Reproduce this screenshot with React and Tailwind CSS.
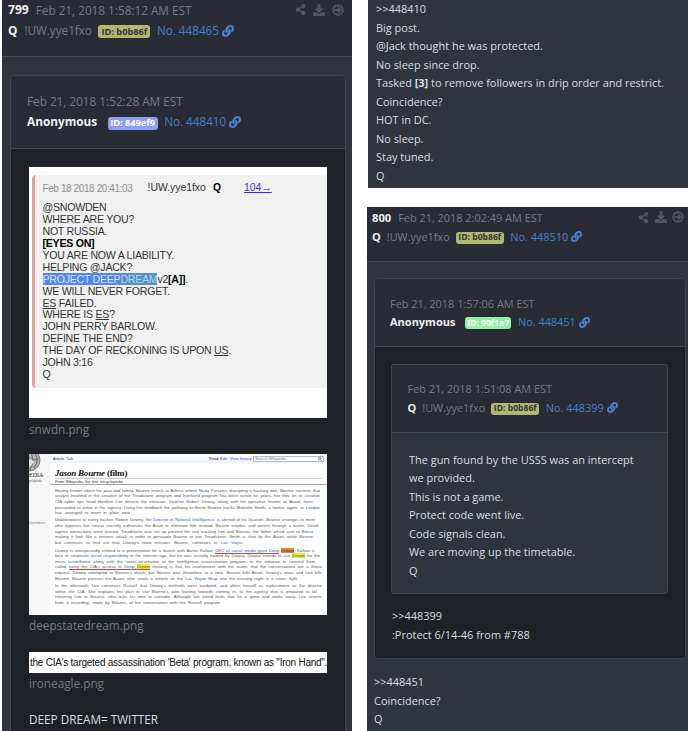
import React from "react";
import { FaShareAlt, FaDownload, FaLink } from "react-icons/fa";

const sans = "font-['Open_Sans','Noto_Sans',sans-serif]";

function CircleArrow({ className }) {
  return (
    <svg viewBox="0 0 24 24" className={className} fill="none" stroke="currentColor" strokeWidth="3.8">
      <circle cx="12" cy="12" r="9.6" />
      <path d="M5.5 12H17M12 6.6L17.4 12L12 17.4" />
    </svg>
  );
}

function Actions({ className }) {
  return (
    <div className={`flex items-center text-[#54565f] ${className}`}>
      <FaShareAlt className="size-[11px]" />
      <FaDownload className="size-[12px]" />
      <CircleArrow className="size-[12px]" />
    </div>
  );
}

const badgeTone = {
  olive: "bg-[#b0b86f] text-[#30333a]",
  violet: "bg-[#8f9df5] text-white",
  green: "bg-[#90f1a7] text-white",
};

function Author({ name, trip, id, tone, no, large, gap }) {
  const badgeSize = large
    ? trip ? "h-[13px] w-[52px] text-[9.2px]" : "h-[13px] w-[50px] text-[9.2px]"
    : trip ? "h-[12px] w-[48px] text-[8.6px]" : "h-[12px] w-[46.5px] text-[8.6px]";
  return (
    <div className={`flex items-center whitespace-nowrap ${large ? "h-5 text-[11.7px]" : "h-[18.5px] text-[10.92px]"}`}>
      <b className={`text-[#f0f0f0] ${large ? "text-[11.8px]" : "text-[11px]"}`}>{name}</b>
      {trip && <span className={`text-[#777a83] ${large ? "ml-[7px]" : "ml-[6px]"}`}>{trip}</span>}
      <span className={`mt-[2px] flex items-center justify-center rounded-[3px] font-bold ${badgeTone[tone]} ${gap} ${badgeSize}`}>
        {id}
      </span>
      <span className="ml-[6.5px] text-[#4380cf]">{no}</span>
      <FaLink className={`ml-[3px] text-[#4a86d8] ${large ? "size-[12px]" : "size-[11px]"}`} stroke="currentColor" strokeWidth="16" />
    </div>
  );
}

function Stamp({ n, children, large }) {
  return (
    <div className={`flex items-center whitespace-nowrap text-[#777a83] ${large ? "h-5 text-[11.75px]" : "h-[18.5px] text-[10.92px]"}`}>
      {n && <b className={`mr-[7px] text-[#f0f0f0] ${large ? "text-[12.1px]" : "text-[11.2px]"}`}>{n}</b>}
      {children}
    </div>
  );
}

function Lines({ children, className = "" }) {
  return <div className={`whitespace-nowrap text-[10.95px] leading-[18.55px] text-[#dcdde0] ${className}`}>{children}</div>;
}

function SnowdenImage() {
  return (
    <div className="h-[251px] w-[297.5px] bg-white pl-[3px] pt-[8px] font-['Liberation_Sans',Arial,sans-serif] text-[#333]">
      <div className="h-[213px] rounded-l-[4px] border-l-[3px] border-[#e9a0a0] bg-[#f1f1f1] pl-[7.5px] pt-[5px]">
        <div className="flex h-[16px] items-center whitespace-nowrap text-[10.4px]">
          <span className="w-[105px] text-[10px] tracking-[-0.4px] text-[#8e8e8e]">Feb 18 2018 20:41:03</span>
          <span className="w-[65.5px]">!UW.yye1fxo</span>
          <b className="w-[31px] text-black">Q</b>
          <u className="text-[#3a2ee0]">104→</u>
        </div>
        <div className="mt-[6px] whitespace-nowrap text-[10.6px] leading-[11.94px] tracking-[-0.26px]">
          <div>@SNOWDEN</div>
          <div>WHERE ARE YOU?</div>
          <div>NOT RUSSIA.</div>
          <div className="font-bold text-black">[EYES ON]</div>
          <div>YOU ARE NOW A LIABILITY.</div>
          <div>HELPING @JACK?</div>
          <div>
            <span className="bg-[#5585f5] text-[#d9e6ff]">PROJECT DEEP</span>
            <span className="bg-[#5590c8] text-[#b9d4ee]">DREAM</span>v2<b className="text-black">[A]]</b>.
          </div>
          <div>WE WILL NEVER FORGET.</div>
          <div><u>ES</u> FAILED.</div>
          <div>WHERE IS <u>ES</u>?</div>
          <div>JOHN PERRY BARLOW.</div>
          <div>DEFINE THE END?</div>
          <div>THE DAY OF RECKONING IS UPON <u>US</u>.</div>
          <div>JOHN 3:16</div>
          <div>Q</div>
        </div>
      </div>
    </div>
  );
}

function L({ children, w = "w-[265px]" }) {
  return <div className={`h-[5.6px] whitespace-nowrap [text-align-last:justify] ${w}`}>{children}</div>;
}
const link = "text-[#3355cc]";
const redLine = "border-b border-[#e03a35]";

function WikiImage() {
  return (
    <div className="flex h-[161px] w-[297.5px] overflow-hidden bg-white font-['Liberation_Sans',Arial,sans-serif] text-[4.3px] leading-[5.6px] text-[#555]">
      <div className="relative w-[21px] shrink-0 bg-[#f6f6f6]">
        <svg viewBox="0 0 21 28" className="absolute left-0 top-0 h-[28px] w-[21px]">
          <circle cx="0" cy="6" r="11" fill="#b5b5b5" stroke="#777" />
          <path d="M0 -4Q7 5 1 16M-1 3Q5 8 10 4M4 -3Q12 5 5 14" fill="none" stroke="#666" strokeWidth="1" />
          <path d="M1 4l4 4-3 4-3-2z" fill="#e2e2e2" />
        </svg>
        <div className="absolute left-0 top-[18px] font-['Liberation_Serif',serif] text-[6px] leading-[7px] text-[#222]">EDIA</div>
        <div className="absolute left-0 top-[25px] text-[3px] leading-[4px]">yclopedia</div>
        <div className="absolute left-0 top-[67px] text-[3.5px] leading-[4px] text-[#777]">Contribute</div>
      </div>
      <div className="min-w-0 flex-1">
        <div className="flex h-[9px] items-center whitespace-nowrap bg-gradient-to-b from-white to-[#edf3fa] pl-[3px] text-[4px]">
          <span className="w-[13px] text-[#222]">Article</span>
          <span className={`w-[143px] ${link}`}>Talk</span>
          <span className="w-[11px] text-[#222]">Read</span>
          <span className={`w-[10px] ${link}`}>Edit</span>
          <span className={`w-[21px] ${link}`}>View history</span>
          <span className="ml-[2px] mt-[1px] flex h-[6px] w-[71px] items-center justify-between border border-[#bbb] bg-white px-px text-[#777]">
            <span>Search Wikipedia</span>
            <svg viewBox="0 0 8 8" className="size-[4px]" fill="none" stroke="#555" strokeWidth="1.5">
              <circle cx="3" cy="3" r="2.3" />
              <path d="M5 5l3 3" />
            </svg>
          </span>
        </div>
        <div className="ml-[5px] mt-[4px] h-[12px] w-[267px] whitespace-nowrap border-b border-[#ccc] font-['Liberation_Serif',serif] text-[9px] leading-[12px] tracking-[-0.2px] text-[#111]">
          <b><i>Jason Bourne</i> (film)</b>
        </div>
        <div className="h-[6px] border-b border-[#a8a8a8] pl-[5px] text-[4px] leading-[6px] text-[#333]">From Wikipedia, the free encyclopedia</div>
        <div className="ml-[5px] mt-[2.8px]">
          <L>Having known about his past and family, Bourne travels to Athens where <span className={link}>Nicky</span> Parsons, disrupting a hacking den, Bourne survives that</L>
          <L>analyst involved in the creation of the Treadstone program and <span className={link}>Ironhand</span> program has been active for years, her files on its creation</L>
          <L w="w-[258px]">CIA cyber ops head Heather Lee detects the intrusion. Director Robert Dewey, along with his operative known as Asset, fears</L>
          <L>persuaded to enlist in the agency. Using her feedback the pathway to Berlin Bourne tracks Malcolm Smith, a former agent, in <span className={link}>London</span></L>
          <L w="w-[75px]">has arranged to meet in plain view</L>
        </div>
        <div className="ml-[5px] mt-[1.7px]">
          <L w="w-[260px]">Unbeknownst to every hacker, Robert Dewey, the <span className={link}>Director of National Intelligence</span>, is alerted of his location. Bourne arranges to meet</L>
          <L w="w-[264px]">who opposes this course secretly authorizes the Asset to eliminate him instead. Bourne evades, and arrives through a series. Death</L>
          <L w="w-[258px]">agents interactions were erased. Treadstone was set up prevent the real tracking him and Bourne, the father who'd sent to <span className={link}>Beirut</span></L>
          <L w="w-[258px]">making it look like a terrorist attack in order to persuade Bourne to join Treadstone. Smith is shot by the Asset, while Bourne</L>
          <L w="w-[188px]">but continues to find out that Dewey's main mission: Bourne, continues to <span className={link}>Las Vegas</span></L>
        </div>
        <div className="ml-[5px] mt-[2.2px]">
          <L w="w-[260px]">Dewey is unexpectedly related to a presentation for a launch with Aaron Kalloor <span className={`${link} ${redLine}`}>CEO of social media giant Deep</span> <span className="bg-[#e08a35] text-[#333]">Dream</span>. Kalloor is</L>
          <L w="w-[265px]">face of <span className={link}>corporate social responsibility</span> in the internet age, but he was secretly funded by Dewey. Dewey intends to use <span className="bg-[#e8ea3a]">Dream</span> for the</L>
          <L w="w-[260px]"><span className={link}>mass surveillance</span> along with the latest incarnation of the intelligence assassination program, in the initiative to conceal from</L>
          <L w="w-[267px]">called <span className={redLine}>using the CIA's access to Deep <span className="bg-[#e8ea3a]">Dream</span></span> thinking is that his involvement with the event, that the conversations are a threat</L>
          <L w="w-[267px]">request. Dewey attempted to Bourne's death, but Bourne was elsewhere at a time. Bourne kills Asset, Dewey's man, and Lee kills</L>
          <L w="w-[242px]">Bourne. Bourne pursues the Asset, who steals a vehicle on the <span className={link}>Las Vegas Strip</span>, into the ensuing night in a sewer fight</L>
        </div>
        <div className="ml-[5px] mt-[1.8px]">
          <L w="w-[267px]">In the aftermath, Lee convinces Russell that Dewey's methods were outdated, and offers herself as replacement as the director</L>
          <L w="w-[262px]">within the CIA. She explains her plan to use Bourne's own leaning towards coming in, to the agency that is prepared to kill</L>
          <L w="w-[267px]">returning him to Bourne, who asks for time to consider. Although her friend finds that he is gone and walks away. Lee returns</L>
          <L w="w-[165px]">finds a recording, made by Bourne, of her conversation with the Russell program</L>
        </div>
      </div>
    </div>
  );
}

function LeftPost() {
  return (
    <section className="ml-[2px] flex h-full w-[349.5px] shrink-0 flex-col bg-[#30343d]">
      <header className="flex h-[57px] shrink-0 items-start justify-between border-b border-[#444851] bg-[#2a2c35] pl-[6px] pr-[8px] pt-[0.5px]">
        <div>
          <Stamp n="799" large>Feb 21, 2018 1:58:12 AM EST</Stamp>
          <Author name="Q" trip="!UW.yye1fxo" id="ID: b0b86f" tone="olive" no="No. 448465" gap="ml-[6.5px]" large />
        </div>
        <Actions className="mt-[3px] gap-[7px]" />
      </header>
      <div className="ml-[8px] mt-[18px] flex w-[336px] flex-1 flex-col rounded-t-[4px] border-x border-t border-[#3f424c] bg-[#1e2125]">
        <div className="h-[73px] rounded-t-[3px] border-b border-[#444851] bg-[#2a2c35] pl-[16px] pt-[16px]">
          <Stamp large>Feb 21, 2018 1:52:28 AM EST</Stamp>
          <Author name="Anonymous" id="ID: 849ef9" tone="violet" no="No. 448410" gap="ml-[10.5px]" large />
        </div>
        <div className="pl-[18px] pt-[18px] text-[11.75px] text-[#777a83]">
          <SnowdenImage />
          <div className="h-[36px] leading-[22px]">snwdn.png</div>
          <WikiImage />
          <div className="h-[37px] leading-[21px]">deepstatedream.png</div>
          <div className="flex h-[21px] w-[297.5px] items-center whitespace-nowrap bg-white pl-[1px] font-['Liberation_Sans',Arial,sans-serif] text-[10px] tracking-[-0.25px] text-[#111]">
            the CIA's targeted assassination 'Beta' program, known as "Iron Hand".
          </div>
          <div className="h-[35px] leading-[21px]">ironeagle.png</div>
          <div className="text-[11.75px] leading-[23px] text-[#dcdde0]">DEEP DREAM= TWITTER</div>
        </div>
      </div>
    </section>
  );
}

function RightPost() {
  return (
    <section className="ml-[-1px] flex w-[321px] flex-1 flex-col bg-[#30343d]">
      <header className="flex h-[55px] shrink-0 items-start justify-between border-b border-[#444851] bg-[#2a2c35] pl-[5px] pr-[4px] pt-[2px]">
        <div>
          <Stamp n="800">Feb 21, 2018 2:02:49 AM EST</Stamp>
          <Author name="Q" trip="!UW.yye1fxo" id="ID: b0b86f" tone="olive" no="No. 448510" gap="ml-[6px]" />
        </div>
        <Actions className="mt-[2px] gap-[5.5px]" />
      </header>
      <div className="ml-[7px] mt-[16px] flex h-[381px] w-[312px] shrink-0 flex-col rounded-[4px] border border-[#3f424c] bg-[#1e2125]">
        <div className="h-[68px] shrink-0 rounded-t-[3px] border-b border-[#444851] bg-[#2a2c35] pl-[15px] pt-[15.5px]">
          <Stamp>Feb 21, 2018 1:57:06 AM EST</Stamp>
          <Author name="Anonymous" id="ID: 90f1a7" tone="green" no="No. 448451" gap="ml-[9.5px]" />
        </div>
        <div className="ml-[16px] mt-[17px] h-[230px] w-[277px] rounded-[3px] border border-[#444851] bg-[#30343d]">
          <div className="h-[68px] rounded-t-[2px] border-b border-[#444851] bg-[#2a2c35] pl-[15.5px] pt-[15px]">
            <Stamp>Feb 21, 2018 1:51:08 AM EST</Stamp>
            <Author name="Q" trip="!UW.yye1fxo" id="ID: b0b86f" tone="olive" no="No. 448399" gap="ml-[6px]" />
          </div>
          <Lines className="pl-[17px] pt-[17.5px]">
            <div>The gun found by the USSS was an intercept</div>
            <div>we provided.</div>
            <div>This is not a game.</div>
            <div>Protect code went live.</div>
            <div>Code signals clean.</div>
            <div>We are moving up the timetable.</div>
            <div>Q</div>
          </Lines>
        </div>
        <Lines className="pl-[17px] pt-[13px]">
          <div>&gt;&gt;448399</div>
          <div>:Protect 6/14-46 from #788</div>
        </Lines>
      </div>
      <Lines className="pl-[7px] pt-[14px]">
        <div>&gt;&gt;448451</div>
        <div>Coincidence?</div>
        <div>Q</div>
      </Lines>
    </section>
  );
}

export default function App() {
  return (
    <main className={`flex h-[731px] w-[688px] overflow-hidden bg-white ${sans}`}>
      <LeftPost />
      <div className="ml-[16.5px] flex min-w-0 flex-1 flex-col">
        <section className="h-[188px] shrink-0 bg-[#30343d]">
          <Lines className="pl-[8px]">
            <div>&gt;&gt;448410</div>
            <div>Big post.</div>
            <div>@Jack thought he was protected.</div>
            <div>No sleep since drop.</div>
            <div>Tasked <b>[3]</b> to remove followers in drip order and restrict.</div>
            <div>Coincidence?</div>
            <div>HOT in DC.</div>
            <div>No sleep.</div>
            <div>Stay tuned.</div>
            <div>Q</div>
          </Lines>
        </section>
        <div className="h-[19px] shrink-0" />
        <RightPost />
      </div>
    </main>
  );
}
